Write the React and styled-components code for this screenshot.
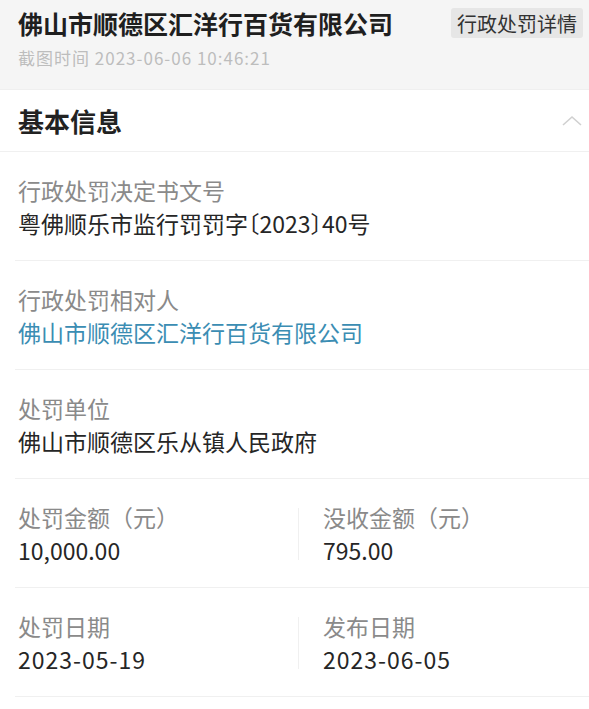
import React from 'react';
import styled, { createGlobalStyle } from 'styled-components';

const GlobalStyle = createGlobalStyle`
  body {
    margin: 0;
    background: #fff;
    font-family: "Noto Sans CJK SC", "Noto Sans", sans-serif;
  }
`;

const Page = styled.div`
  width: 589px;
  min-height: 709px;
  background: #fff;
  overflow: hidden;
`;

const Header = styled.header`
  height: 90px;
  box-sizing: border-box;
  padding: 8px 6px 0 18px;
  background: #f5f5f5;
  border-bottom: 1px solid #efefef;
`;

const TitleRow = styled.div`
  display: flex;
  justify-content: space-between;
  align-items: center;
`;

const Title = styled.h1`
  margin: 0;
  font-size: 25px;
  line-height: 30px;
  font-weight: 700;
  color: #1f1f1f;
`;

const Tag = styled.span`
  height: 30px;
  padding: 0 6px;
  display: flex;
  align-items: center;
  background: #e6e6e6;
  border-radius: 3px;
  font-size: 20px;
  color: #333;
`;

const Subtitle = styled.div`
  margin-top: 8px;
  font-size: 17px;
  line-height: 24px;
  letter-spacing: 1px;
  color: #bdbdbd;
`;

const SectionHead = styled.div`
  height: 61px;
  display: flex;
  align-items: center;
  justify-content: space-between;
  padding: 0 6px 0 18px;
  border-bottom: 1px solid #f0f0f0;
`;

const SectionTitle = styled.h2`
  margin: 0;
  font-size: 26px;
  font-weight: 700;
  color: #222;
`;

const Field = styled.div`
  margin-left: 15px;
  padding: 22px 0 20px 3px;
  border-bottom: 1px solid #f0f0f0;
`;

const Label = styled.div`
  font-size: 23px;
  line-height: 33px;
  color: #8a8a8a;
`;

const Value = styled.div`
  font-size: 23px;
  line-height: 33px;
  font-feature-settings: "halt";
  letter-spacing: ${(p) => (p.$wide ? '1px' : '0')};
  color: ${(p) => (p.$link ? '#3b8db3' : '#262626')};
`;

const Pair = styled(Field)`
  display: grid;
  grid-template-columns: 280px 1px 1fr;
`;

const VDivider = styled.div`
  align-self: center;
  height: 52px;
  background: #f0f0f0;
`;

const Cell = styled.div`
  padding-left: ${(p) => (p.$right ? '24px' : '0')};
`;

const Chevron = () => (
  <svg width="22" height="12" viewBox="0 0 22 12">
    <polyline points="2,10 11,2 20,10" fill="none" stroke="#d0d0d0" strokeWidth="1.6" />
  </svg>
);

const fields = [
  { label: '行政处罚决定书文号', value: '粤佛顺乐市监行罚罚字〔2023〕40号' },
  { label: '行政处罚相对人', value: '佛山市顺德区汇洋行百货有限公司', link: true },
  { label: '处罚单位', value: '佛山市顺德区乐从镇人民政府' },
];

const pairs = [
  [
    { label: '处罚金额（元）', value: '10,000.00' },
    { label: '没收金额（元）', value: '795.00' },
  ],
  [
    { label: '处罚日期', value: '2023-05-19', wide: true },
    { label: '发布日期', value: '2023-06-05', wide: true },
  ],
];

export default function App() {
  return (
    <Page>
      <GlobalStyle />
      <Header>
        <TitleRow>
          <Title>佛山市顺德区汇洋行百货有限公司</Title>
          <Tag>行政处罚详情</Tag>
        </TitleRow>
        <Subtitle>截图时间 2023-06-06 10:46:21</Subtitle>
      </Header>
      <SectionHead>
        <SectionTitle>基本信息</SectionTitle>
        <Chevron />
      </SectionHead>
      {fields.map((f) => (
        <Field key={f.label}>
          <Label>{f.label}</Label>
          <Value $link={f.link}>{f.value}</Value>
        </Field>
      ))}
      {pairs.map(([a, b]) => (
        <Pair key={a.label}>
          <Cell>
            <Label>{a.label}</Label>
            <Value $wide={a.wide}>{a.value}</Value>
          </Cell>
          <VDivider />
          <Cell $right>
            <Label>{b.label}</Label>
            <Value $wide={b.wide}>{b.value}</Value>
          </Cell>
        </Pair>
      ))}
    </Page>
  );
}
